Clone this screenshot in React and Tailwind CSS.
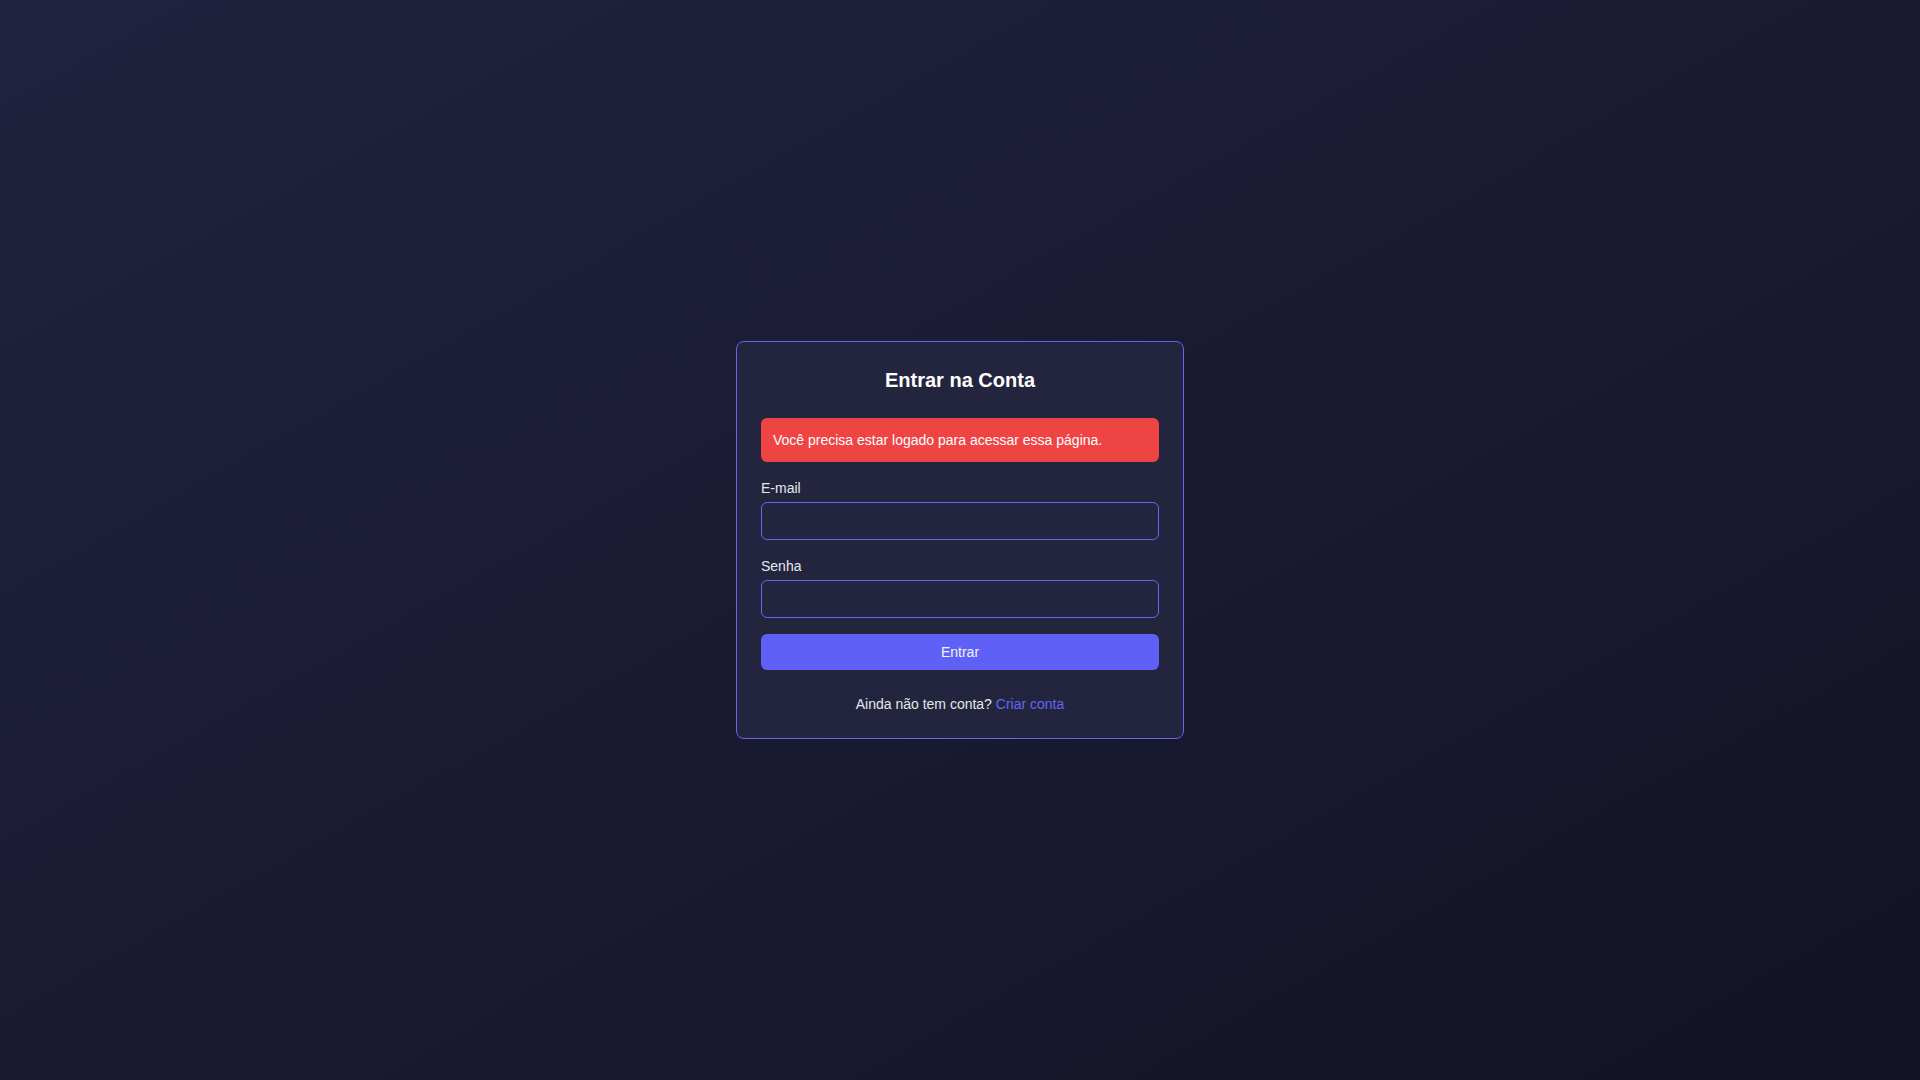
import React, { useState } from "react";

function App() {
  const [email, setEmail] = useState("");
  const [senha, setSenha] = useState("");

  return (
    <div className="min-h-screen flex items-center justify-center bg-gradient-to-br from-[#21223f] to-[#131326] font-['Liberation_Sans',Arial,sans-serif]">
      <div className="w-[448px] bg-[#23253f] border border-[#6366f1] rounded-lg p-6">
        <h2 className="text-xl font-bold text-white text-center mb-6">Entrar na Conta</h2>
        <div className="bg-[#ef4444] text-white text-sm px-3 py-3 rounded-md mb-4">
          Você precisa estar logado para acessar essa página.
        </div>
        <form onSubmit={(e) => e.preventDefault()}>
          <div className="mb-4">
            <label className="block text-sm text-[#e5e7eb] mb-1">E-mail</label>
            <input
              type="email"
              value={email}
              onChange={(e) => setEmail(e.target.value)}
              className="block w-full h-[38px] px-2 text-sm text-white bg-[#23253f] border border-[#6366f1] rounded-md outline-none"
            />
          </div>
          <div className="mb-4">
            <label className="block text-sm text-[#e5e7eb] mb-1">Senha</label>
            <input
              type="password"
              value={senha}
              onChange={(e) => setSenha(e.target.value)}
              className="block w-full h-[38px] px-2 text-sm text-white bg-[#23253f] border border-[#6366f1] rounded-md outline-none"
            />
          </div>
          <button type="submit" className="w-full h-9 bg-[#5e60f6] text-[#f3f4f6] text-sm rounded-md">
            Entrar
          </button>
        </form>
        <p className="mt-6 text-center text-sm text-[#e5e7eb]">
          Ainda não tem conta? <a href="#" className="text-[#6366f1]">Criar conta</a>
        </p>
      </div>
    </div>
  );
}

export default App;
